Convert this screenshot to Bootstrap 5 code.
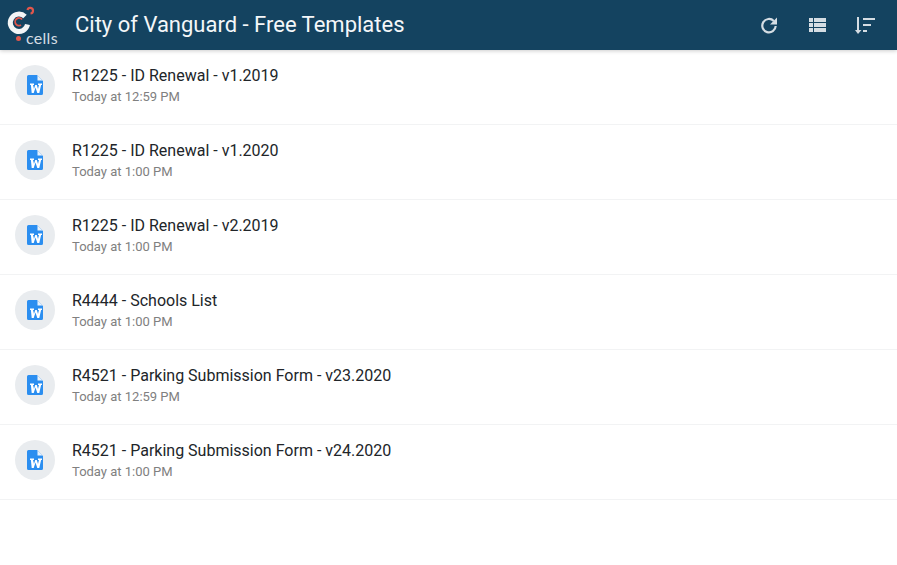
<!DOCTYPE html>
<html lang="en">
<head>
  <meta charset="UTF-8" />
  <meta name="viewport" content="width=device-width, initial-scale=1" />
  <title>City of Vanguard - Free Templates</title>
  <link href="https://cdn.jsdelivr.net/npm/bootstrap@5.3.0/dist/css/bootstrap.min.css" rel="stylesheet" />
  <style>
    html, body {
      height: 100%;
      background: #fff;
      font-family: Roboto, "Liberation Sans", sans-serif;
    }
    .top-bar {
      height: 50px;
      background: #144360;
      box-shadow: 0 1px 4px rgba(0, 0, 0, 0.2);
      padding-right: 8px;
    }
    .top-title {
      font-size: 22px;
      color: #f4f7f9;
      margin-left: 15px;
      padding-bottom: 2px;
    }
    .logo-box {
      width: 60px;
      height: 50px;
    }
    .logo-text {
      font-size: 16px;
      letter-spacing: 0.3px;
      fill: #d5dde3;
      font-family: Lato, sans-serif;
    }
    .tool-btn {
      width: 48px;
      height: 50px;
    }
    .file-row {
      height: 75px;
      padding: 0 15px 4px;
      border-bottom: 1px solid #f2f3f4;
    }
    .file-badge {
      width: 40px;
      height: 40px;
      background: #e9ecef;
      margin-right: 17px;
    }
    .file-text {
      padding-top: 2px;
    }
    .file-name {
      font-size: 16px;
      line-height: 20px;
      color: #212529;
    }
    .file-time {
      font-size: 13px;
      line-height: 18px;
      color: #808080;
      margin-top: 2px;
    }
  </style>
</head>
<body>
  <header class="top-bar d-flex align-items-center position-relative">
    <div class="logo-box flex-shrink-0">
      <svg width="60" height="50" viewBox="0 0 60 50">
        <path d="M25 16.500A8.700 8.700 0 1 0 27.500 24.500" fill="none" stroke="#f3f5f6" stroke-width="5" />
        <path d="M22 19.500a3.800 3.800 0 1 0 -1 5.500" fill="none" stroke="#e2574c" stroke-width="1.800" />
        <path d="M27.500 10a2.800 2.800 0 1 1 3 3.500" fill="none" stroke="#e2574c" stroke-width="2.200" />
        <circle cx="18.500" cy="38.500" r="2.500" fill="#e2574c" />
        <text class="logo-text" x="26" y="44">cells</text>
      </svg>
    </div>
    <div class="top-title flex-grow-1">City of Vanguard - Free Templates</div>
    <div class="d-flex align-items-center">
      <div class="tool-btn d-flex align-items-center justify-content-center">
        <svg width="18" height="18" viewBox="0 0 18 18"><path d="M13.800 5A6.700 6.700 0 1 0 15.700 10" fill="none" stroke="#d5dde3" stroke-width="2.200" /><path d="M17 1.500v7h-7z" fill="#d5dde3" /></svg>
      </div>
      <div class="tool-btn d-flex align-items-center justify-content-center">
        <svg width="17" height="14" viewBox="0 0 17 14" fill="#d5dde3"><path d="M0 0h4v4H0zM5 0h12v4H5zM0 5h4v4H0zM5 5h12v4H5zM0 10h4v4H0zM5 10h12v4H5z" /></svg>
      </div>
      <div class="tool-btn d-flex align-items-center justify-content-center">
        <svg width="20" height="17" viewBox="0 0 20 17" fill="#d5dde3"><path d="M2 0h2v13h2.500L3 17 0 13h2zM8 1h12v2H8zM8 7h8v2H8zM8 13h4v2H8z" /></svg>
      </div>
    </div>
  </header>
  <main id="fileList"></main>

  <script>
    const files = [
      ['R1225 - ID Renewal - v1.2019', 'Today at 12:59 PM'],
      ['R1225 - ID Renewal - v1.2020', 'Today at 1:00 PM'],
      ['R1225 - ID Renewal - v2.2019', 'Today at 1:00 PM'],
      ['R4444 - Schools List', 'Today at 1:00 PM'],
      ['R4521 - Parking Submission Form - v23.2020', 'Today at 12:59 PM'],
      ['R4521 - Parking Submission Form - v24.2020', 'Today at 1:00 PM']
    ];
    const icon = '<svg width="16" height="20" viewBox="0 0 16 20">' +
      '<path d="M1.500 0H10l6 6v12.500a1.500 1.500 0 0 1-1.500 1.500h-13A1.500 1.500 0 0 1 0 18.500v-17A1.500 1.500 0 0 1 1.500 0z" fill="#2b8ef0"/>' +
      '<path d="M10.500 0.500v5h5z" fill="#e9f2fb"/>' +
      '<path d="M3 8.500h4v1.500h-1l1 4 1.200-4h1.600l1.200 4 1-4h-1V8.500h4V10h-.9L12.300 18H10.300L8.500 12.500 6.700 18H4.700L3.900 10H3z" fill="#fff"/></svg>';
    document.getElementById('fileList').innerHTML = files.map(f =>
      '<div class="file-row d-flex align-items-center">' +
      '<div class="file-badge rounded-circle d-flex align-items-center justify-content-center flex-shrink-0">' + icon + '</div>' +
      '<div class="file-text"><div class="file-name">' + f[0] + '</div><div class="file-time">' + f[1] + '</div></div></div>'
    ).join('');
  </script>
  <script src="https://cdn.jsdelivr.net/npm/bootstrap@5.3.0/dist/js/bootstrap.bundle.min.js"></script>
</body>
</html>
